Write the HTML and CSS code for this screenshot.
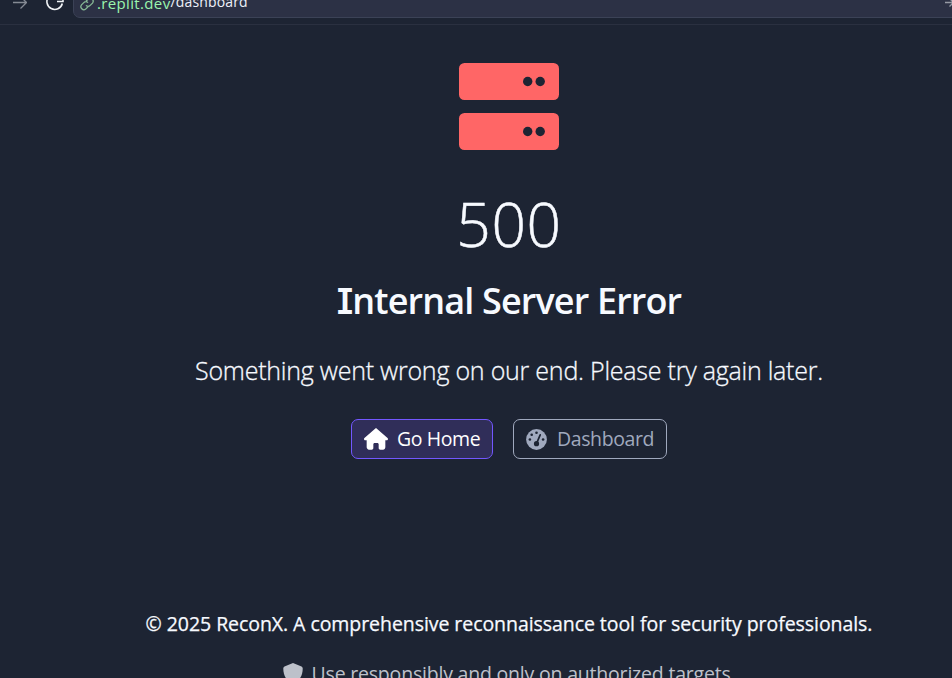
FILE: index.html
```html
<!DOCTYPE html>
<html lang="en">
<head>
<meta charset="utf-8">
<title>Internal Server Error</title>
<link rel="stylesheet" href="styles.css">
</head>
<body>
<header class="toolbar">
  <svg class="forward" width="14" height="14" viewBox="0 0 14 14"><path d="M0 7.5H13M7.5 1.5l6 6-6 6"/></svg>
  <svg class="reload" width="20" height="20" viewBox="0 0 20 20"><path d="M17.3 11.5A7.8 7.8 0 1 1 16 5M18 3v6.5H12"/></svg>
  <div class="address">
    <svg class="link" width="16" height="16" viewBox="0 0 16 16"><path d="M7 5.2l2.3-2.3a3 3 0 0 1 4.2 4.2l-2.3 2.3a3 3 0 0 1-4.2 0M9 10.8l-2.3 2.3a3 3 0 0 1-4.2-4.2l2.3-2.3a3 3 0 0 1 4.2 0"/></svg>
    <span class="host">.replit.dev</span><span class="path">/dashboard</span>
    <svg class="go" width="14" height="14" viewBox="0 0 14 14"><path d="M0 7.5H8.5M4.5 3.5l4 4-4 4"/></svg>
  </div>
</header>
<main class="error">
  <svg class="server" width="102" height="90" viewBox="0 0 102 90">
    <rect x="1" y="1" width="100" height="37" rx="5.5"/><rect x="1" y="51" width="100" height="37" rx="5.5"/>
    <g class="lights"><circle cx="69.7" cy="19.5" r="4.7"/><circle cx="82.2" cy="19.5" r="4.7"/><circle cx="69.7" cy="69.5" r="4.7"/><circle cx="82.2" cy="69.5" r="4.7"/></g>
  </svg>
  <h1 class="code">500</h1>
  <h2 class="title"><span class="initial">I</span>nternal Server Error</h2>
  <p class="lead">Something went wrong on our end. Please try again later.</p>
  <div class="actions">
    <a class="button primary">
      <svg width="24" height="22" viewBox="0 0 576 512"><path d="M575.8 255.5c0 18-15 32.1-32 32.1h-32l.7 160.2c0 36-24 64.2-56 64.2H392c-22 0-40-18-40-40v-88c0-18-14-32-32-32h-64c-18 0-32 14-32 32v88c0 22-18 40-40 40h-64c-32 0-56-28-56-56V287.6H32c-18 0-32-14-32-32.1 0-9 3-17 10-24L266.4 8c7-7 15-8 22-8s15 2 21 7l255 224.5c8 7 12 15 11.4 24z"/></svg>
      <span>Go Home</span>
    </a>
    <a class="button secondary">
      <svg width="21" height="21" viewBox="0 0 21 21"><circle cx="10.5" cy="10.5" r="10.4"/><g class="marks"><circle cx="10.5" cy="3.8" r="1.3"/><circle cx="5.7" cy="5.8" r="1.3"/><circle cx="3.9" cy="10.5" r="1.3"/><circle cx="17.1" cy="10.5" r="1.3"/><circle cx="10.5" cy="14.7" r="2.6"/><path d="M10.5 14.7L14.2 5.8"/></g></svg>
      <span>Dashboard</span>
    </a>
  </div>
</main>
<footer class="footer">
  <p class="copyright">© 2025 ReconX. A comprehensive reconnaissance tool for security professionals.</p>
  <p class="notice"><svg width="20" height="21" viewBox="0 0 20 21"><path d="M10 0L18.5 3.5Q19.7 4 19.7 5.5C19.7 13 16 18.5 10 21C4 18.5.3 13 .3 5.5Q.3 4 1.5 3.5Z"/></svg><span>Use responsibly and only on authorized targets.</span></p>
</footer>
</body>
</html>
```
FILE: styles.css
```css
* { box-sizing: border-box; }
html { overflow: hidden; background: #1d2433; }
body { margin: 0; width: 952px; height: 678px; overflow: hidden; background: #1d2433; color: #f7faff; font-family: "Open Sans", "Noto Sans", sans-serif; }
h1, h2, p { margin: 0; font-weight: 400; white-space: nowrap; }
.toolbar { display: flex; width: 952px; height: 25px; overflow: hidden; border-bottom: 1px solid #2a3040; }
.toolbar svg { fill: none; flex: none; }
.forward { margin: -5px 0 0 13px; stroke: #858a94; stroke-width: 1.3; }
.reload { margin: -8px 0 0 18px; stroke: #f0f3f6; stroke-width: 1.6; }
.address { display: flex; flex: 1; margin: -14px -10px 0 8px; height: 32px; padding: 7px 0 0 6px; background: #2c3145; border: 1px solid #3b4256; border-radius: 7px; font-size: 14px; line-height: 18px; }
.link { margin: 2px 2px 0 -1px; stroke: #87b995; stroke-width: 1.3; }
.host { color: #9af5ad; font-size: 15px; letter-spacing: .35px; }
.path { margin-top: -1px; color: #eef1fa; letter-spacing: .15px; }
.go { margin: 1px 2px 0 auto; stroke: #969aa5; stroke-width: 1.3; }
.error { display: flex; flex-direction: column; align-items: center; padding: 37px 0 0 66px; }
.server { fill: #ff6666; }
.lights { fill: #1d2433; }
.code { margin-top: 36px; height: 72px; line-height: 72px; font-size: 60.5px; font-weight: 300; letter-spacing: .6px; -webkit-text-stroke: .5px; }
.title { margin-top: 19px; height: 44px; line-height: 44px; font-size: 36px; font-weight: 600; letter-spacing: -.86px; }
.initial { font-family: Inter, sans-serif; font-feature-settings: "cv08"; font-size: 35.5px; }
.lead { margin-top: 29px; height: 36px; line-height: 36px; font-size: 25px; font-weight: 300; letter-spacing: -.23px; -webkit-text-stroke: .3px; }
.actions { display: flex; gap: 20px; margin-top: 31px; }
.button { display: flex; align-items: center; height: 40px; padding: 0 12px; border: 1px solid; border-radius: 7px; font-size: 19.5px; letter-spacing: -.4px; white-space: nowrap; }
.button span { margin-top: -1px; }
.button svg { flex: none; fill: currentColor; }
.primary { width: 142px; gap: 9px; background: #302e59; border-color: #7357ff; color: #fff; }
.secondary { width: 154px; gap: 10px; border-color: #a0a9be; color: #a0a9be; }
.marks { fill: #1d2433; }
.marks path { stroke: #1d2433; stroke-width: 1.7; stroke-linecap: round; }
.footer { display: flex; flex-direction: column; align-items: center; margin-top: 149px; padding-left: 66px; }
.copyright { height: 32px; line-height: 32px; font-size: 19.5px; letter-spacing: -.06px; -webkit-text-stroke: .25px; }
.notice { display: flex; gap: 9px; margin-top: 18px; height: 32px; line-height: 32px; font-size: 19.5px; letter-spacing: -.2px; color: #bdc1ca; }
.notice svg { margin-top: 5px; fill: #bdc1ca; }
```
